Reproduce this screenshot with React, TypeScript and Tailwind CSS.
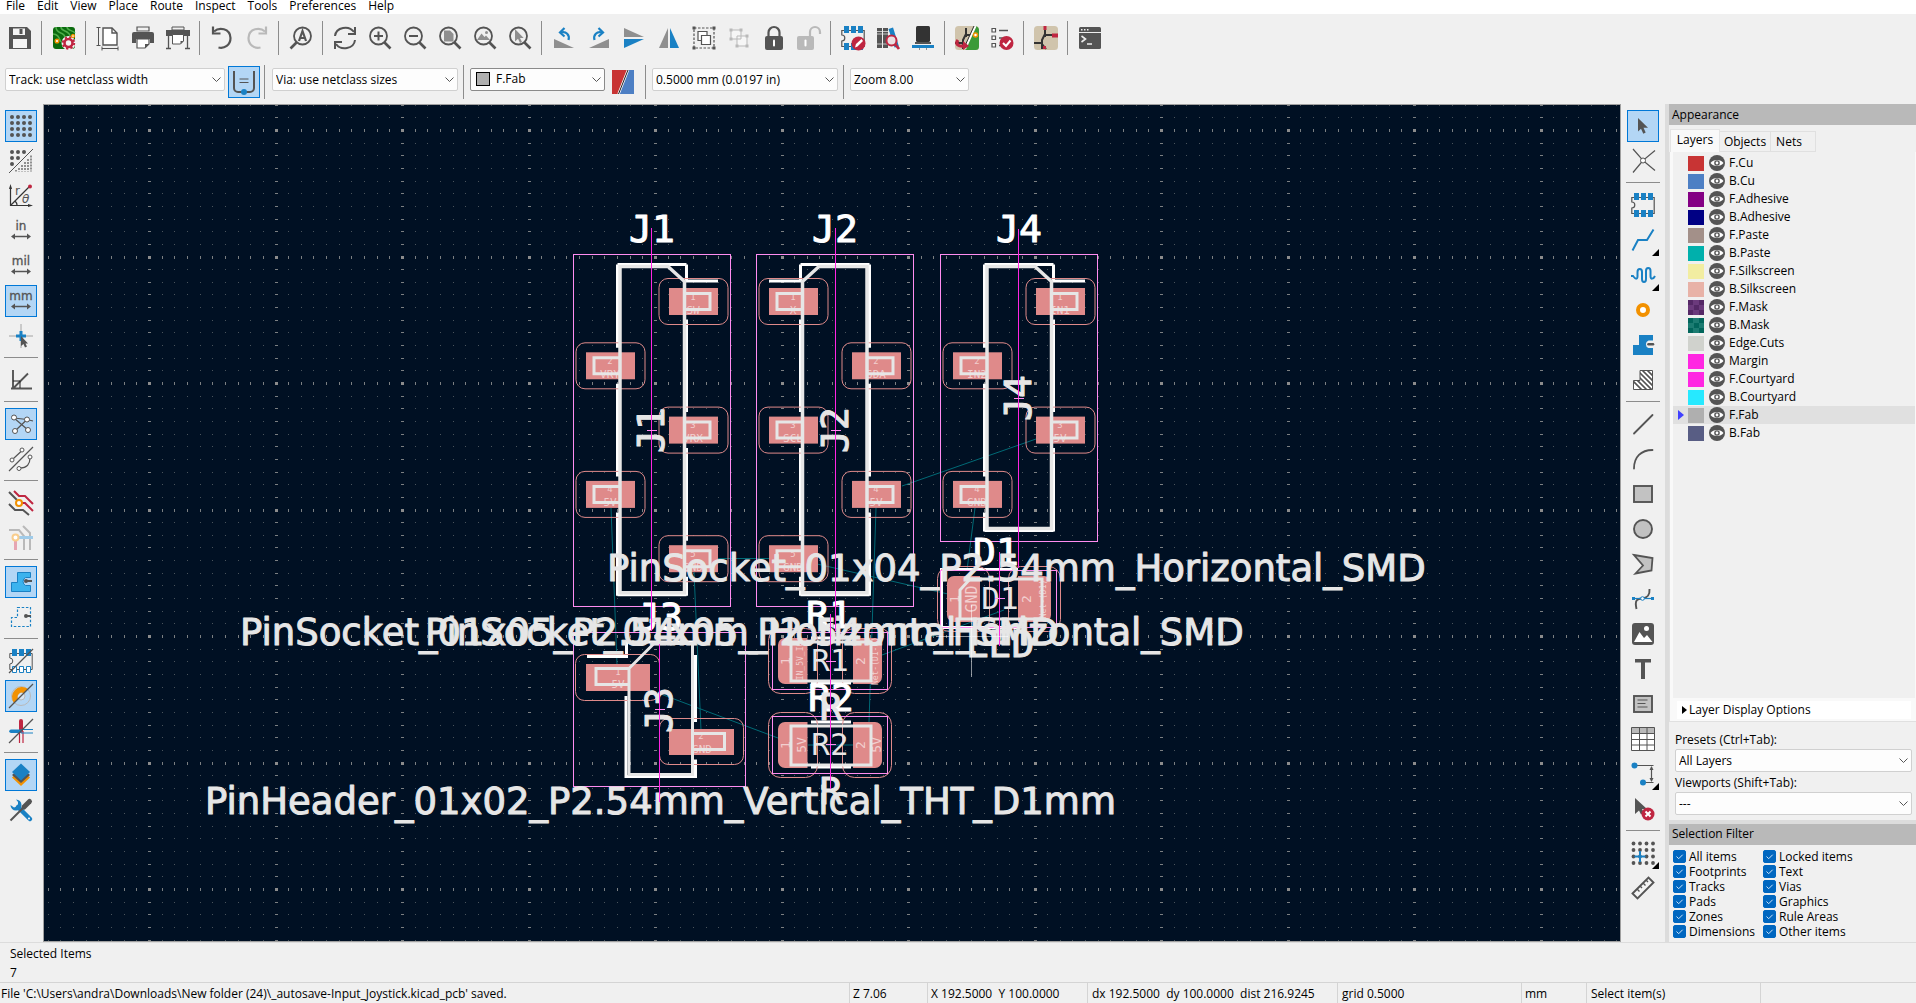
import React, { useState } from "react";

const D = "#545454";
const B = "#1a81c4";
const R = "#bf2641";
const O = "#f29100";
const G = "#b9b9b9";
const M = "#8f8f8f";

const lens = (
  <>
    <circle cx="10.5" cy="10" r="8.5" fill="none" stroke={D} strokeWidth="1.8" />
    <path d="M16.5 16.5 22.5 22.5" stroke={D} strokeWidth="2.6" />
  </>
);

const footprint = (
  <>
    <path d="M.8 4.5V9a3 3 0 0 1 0 6v5.5h22.4v-16z" fill="none" stroke={D} strokeWidth="1.2" />
    <path d="M3 0h5v7H3zM10 0h5v7h-5zM17 0h5v7h-5zM3 17h5v7H3zM10 17h5v7h-5zM17 17h5v7h-5z" fill={B} />
  </>
);

const arrows = <path d="M2 16.5 6 13.5v2.2h12v-2.2l4 3-4 3v-2.2H6v2.2z" transform="translate(0 1)" fill={D} />;

const schematic = (
  <>
    <rect x="0" y="0" width="24" height="24" rx="3.5" fill="#d0c4ac" />
    <path d="M11 2v9M11 9h9M11 8 8 14v9M0 17h8M8 18l4 5" fill="none" stroke="#333" strokeWidth="2" />
  </>
);

const icons: Record<string, React.ReactNode> = {
  save: (
    <>
      <path d="M1 1h18l4 4v18H1z" fill={D} />
      <path d="M5 2.5h12v6.5H5zM5 13h14v9H5z" fill="#f4f4f4" />
      <path d="M11.5 3h3v5h-3z" fill={D} />
    </>
  ),
  boardSetup: (
    <>
      <rect x="1" y="1" width="22" height="22" rx="3" fill="#0b6b0f" />
      <path d="M4 1c0 8 9 4 9 11M9 1c0 5 8 3 9 9M15 1c0 4 6 3 8 6M1 8c5 0 6 4 8 8" fill="none" stroke="#4fae4a" strokeWidth="1.5" />
      <circle cx="16.5" cy="17" r="7" fill="#f4f4f4" />
      <circle cx="16.5" cy="17" r="4" fill="none" stroke={R} strokeWidth="2.6" />
      <circle cx="16.5" cy="17" r="5.7" fill="none" stroke={R} strokeWidth="2" strokeDasharray="2.24 2.24" />
      <circle cx="5" cy="15" r="1.8" fill="#fff" stroke={O} strokeWidth="1.5" />
      <circle cx="21" cy="10" r="1.5" fill="#fff" stroke={O} strokeWidth="1.3" />
    </>
  ),
  page: (
    <>
      <path d="M7 2h9l5 5v12H7z" fill="#fff" stroke={D} strokeWidth="1.4" />
      <path d="M16 2v5h5" fill="none" stroke={D} strokeWidth="1.4" />
      <path d="M2.5 1.5v18M.5 1.5h4M.5 19.5h4M6 22.5h16M6 20.5v4M22 20.5v4" stroke={D} />
    </>
  ),
  print: (
    <>
      <path d="M6 1h12v4H6z" fill="none" stroke={D} strokeWidth="1.2" />
      <path d="M1 8a2 2 0 0 1 2-2h18a2 2 0 0 1 2 2v9h-4v-4H5v4H1z" fill={D} />
      <path d="M6 13h12v5l-4 4H6z" fill="#fff" stroke={D} strokeWidth="1.2" />
      <path d="M18 18h-4v4z" fill={D} />
    </>
  ),
  plot: (
    <>
      <path d="M6 1h12v3H6z" fill="none" stroke={D} />
      <path d="M0 4h24v6H0z" fill={D} />
      <path d="M2.5 10v13M21.5 10v13M0 22.5h5M19 22.5h5" stroke={D} strokeWidth="1.3" />
      <path d="M6.5 8.5h11V15l-3 3h-8z" fill="#fff" stroke={D} />
      <path d="M17.5 15h-3v3z" fill={D} />
    </>
  ),
  undo: (
    <>
      <path d="M4 5.5C9 1 20 2 20.5 12c0 7-6 11-12 9.5" fill="none" stroke={D} strokeWidth="2.2" />
      <path d="M3 .5v7h7.5" fill="none" stroke={D} strokeWidth="2.2" />
    </>
  ),
  redo: (
    <>
      <path d="M20 5.5C15 1 4 2 3.5 12c0 7 6 11 12 9.5" fill="none" stroke={G} strokeWidth="2.2" />
      <path d="M21 .5v7h-7.5" fill="none" stroke={G} strokeWidth="2.2" />
    </>
  ),
  find: (
    <>
      <circle cx="13.5" cy="10" r="8.5" fill="none" stroke={D} strokeWidth="1.8" />
      <path d="M7.5 16.5 1.5 22.5" stroke={D} strokeWidth="2.6" />
      <path d="M10 15 13.5 5 17 15M11 12h5" fill="none" stroke={D} strokeWidth="2.2" />
    </>
  ),
  refresh: (
    <>
      <path d="M2 10C3 1 16-1 21 6M22 14c-1 9-14 11-19 4" fill="none" stroke={D} strokeWidth="2" />
      <path d="M22 1v7h-7M2 23v-7h7" fill="none" stroke={D} strokeWidth="2" />
    </>
  ),
  zoomIn: (
    <>
      {lens}
      <path d="M10.5 5.5v9M6 10h9" stroke={D} strokeWidth="2" />
    </>
  ),
  zoomOut: (
    <>
      {lens}
      <path d="M6 10h9" stroke={D} strokeWidth="2" />
    </>
  ),
  zoomPage: (
    <>
      {lens}
      <path d="M6 4.5h6l3.5 3.5v7.5H6z" fill={M} />
    </>
  ),
  zoomObjects: (
    <>
      {lens}
      <path d="M4 14 8.5 7.5l3 3.5 1.5-1.5 4 4.5z" fill={M} />
      <circle cx="13.5" cy="6.5" r="1.5" fill={M} />
    </>
  ),
  zoomSelection: (
    <>
      {lens}
      <path d="M7 3v12.5l3-2.7 2 4.2 2-1-2-4h3.7z" fill={M} />
    </>
  ),
  rotateCcw: (
    <>
      <path d="M2 13v9h20z" fill={M} />
      <path d="M16.5 14C18 9 14 5 9 6.5" fill="none" stroke={B} strokeWidth="2.2" />
      <path d="M12.5 2 8 6.5l4.5 4" fill="none" stroke={B} strokeWidth="2.2" />
    </>
  ),
  rotateCw: (
    <>
      <path d="M22 13v9H2z" fill={M} />
      <path d="M7.5 14C6 9 10 5 15 6.5" fill="none" stroke={B} strokeWidth="2.2" />
      <path d="M11.5 2 16 6.5l-4.5 4" fill="none" stroke={B} strokeWidth="2.2" />
    </>
  ),
  flipV: (
    <>
      <path d="M2 2v9h20z" fill={M} />
      <path d="M2 22v-9h20z" fill={B} />
    </>
  ),
  flipH: (
    <>
      <path d="M11 2v20H2z" fill={M} />
      <path d="M13 2v20h9z" fill={B} />
    </>
  ),
  group: (
    <>
      <rect x="2" y="2" width="20" height="20" fill="none" stroke={D} strokeWidth="1.2" strokeDasharray="2.5 1.5" />
      <path d="M.5.5h3v3h-3zM20.5.5h3v3h-3zM.5 20.5h3v3h-3zM20.5 20.5h3v3h-3z" fill={D} />
      <path d="M6 5.5h9v9H6z" fill="#fff" stroke={D} strokeWidth="1.2" />
      <path d="M9.5 9.5h9v9h-9z" fill="#fff" stroke={D} strokeWidth="1.2" />
    </>
  ),
  ungroup: (
    <>
      <path d="M4 4h10v9H4zM10 10h10v10H10z" fill="#f6f6f6" stroke={G} />
      <path d="M2.5 2.5h3v3h-3zM12.5 2.5h3v3h-3zM2.5 11.5h3v3h-3zM18.5 8.5h3v3h-3zM8.5 18.5h3v3h-3zM18.5 18.5h3v3h-3z" fill={G} />
    </>
  ),
  lock: (
    <>
      <path d="M6.5 11V6.5a5.5 5.5 0 0 1 11 0V11" fill="none" stroke={D} strokeWidth="2.2" />
      <rect x="3" y="10" width="18" height="14" rx="2" fill={D} />
      <path d="M12 14.5v5" stroke="#fff" strokeWidth="2" strokeLinecap="round" />
    </>
  ),
  unlock: (
    <>
      <path d="M13 11V6a5 5 0 0 1 10 0v2" fill="none" stroke={G} strokeWidth="2.2" />
      <rect x="0" y="10" width="17" height="14" rx="2" fill={G} />
      <path d="M8.5 14.5v5" stroke="#fff" strokeWidth="2" strokeLinecap="round" />
    </>
  ),
  footprintEditor: (
    <>
      {footprint}
      <circle cx="17.5" cy="17.5" r="7" fill={R} />
      <path d="M14 21.5 15 18l5.5-5 1.5 2-5.5 5.5z" fill="#fff" />
    </>
  ),
  library: (
    <>
      <path d="M1 2h5v20H1zM7 2h5v20H7z" fill={D} />
      <path d="M1 5.5h5M1 8h5M7 5.5h5M7 8h5M1 18h11" stroke="#ddd" strokeWidth=".8" />
      <path d="m12.5 3 4.5-1.5 6 19-4.5 1z" fill={B} />
      <circle cx="15.5" cy="14.5" r="5" fill="#eadfe2" stroke={R} strokeWidth="2" />
      <path d="M19 18l4 5" stroke={R} strokeWidth="2.8" />
    </>
  ),
  viewer3d: (
    <>
      <rect x="5" y="0" width="14" height="16" rx="1.5" fill="#333" />
      <path d="M4 16h16v2H4z" fill={D} />
      <path d="M1 19h22v3H1z" fill={B} />
      <path d="M8.5 22v2M15.5 22v2" stroke={M} />
    </>
  ),
  updatePcb: (
    <>
      {schematic}
      <path d="M19.5 0a4.5 4.5 0 0 1 4.5 3.5v17a3.5 3.5 0 0 1-3.5 3.5H10z" fill="#3c9a38" />
      <path d="M20.5 0 10 23" stroke="#fff" strokeWidth="2" />
      <path d="M19 0 9 22" stroke="#333" strokeWidth="1" />
      <circle cx="20.5" cy="9" r="2" fill="#fff" stroke={O} strokeWidth="1.5" />
      <path d="M3 14c-3 4 0 7 7 6" fill="none" stroke={R} strokeWidth="3.2" />
      <path d="m8 15 6 5-6 4z" fill={R} />
    </>
  ),
  drc: (
    <>
      <path d="M2 2.5h3.5V6H2zM2 10h3.5v3.5H2zM2 17.5h3.5V21H2z" fill="#fff" stroke={D} strokeWidth="1.2" />
      <path d="M9 4.5h9M9 12h5M9 19.5h3" stroke={D} strokeWidth="1.5" />
      <circle cx="16.5" cy="17" r="7" fill={R} />
      <path d="m13 17 3 3 4.5-5.5" fill="none" stroke="#fff" strokeWidth="2" />
    </>
  ),
  schematicEditor: (
    <>
      {schematic}
      <path d="M9.5 0h3v4h-3zM18 7.5h6v4h-6zM9 20h3v3H9z" fill={R} />
    </>
  ),
  console: (
    <>
      <rect x="1" y="1" width="22" height="22" rx="1.5" fill={D} />
      <path d="M1 6.5h22" stroke="#eee" />
      <path d="M3 3.8h1.5M6 3.8h1.5M9 3.8h1.5" stroke="#eee" strokeWidth="1.5" />
      <path d="m3.5 10 4 3-4 3M9 18h5" fill="none" stroke="#eee" strokeWidth="1.6" />
    </>
  ),
  trackWidth: (
    <>
      <path d="M2 1v17a4 4 0 0 0 4 4h12a4 4 0 0 0 4-4V1" fill="none" stroke={D} strokeWidth="2" />
      <path d="M7.5 9h9M7.5 12.5h9" stroke={D} />
      <circle cx="12" cy="22" r="3" fill={B} />
    </>
  ),
  layerPair: (
    <>
      <path d="M1 0h22v24H1z" fill="#c83434" />
      <path d="M17 0h6v24H8z" fill="#4d7fc4" />
      <path d="M17 0 7.5 24" stroke="#fff" strokeWidth="2.4" />
      <path d="M17 0 7.5 24" stroke="#222" strokeWidth="1" />
    </>
  ),
  grid: (
    <>
      {[3, 9, 15, 21].map((y) =>
        [3, 9, 15, 21].map((x) => <circle key={x + "-" + y} cx={x} cy={y} r="2" fill={D} />),
      )}
    </>
  ),
  gridOverride: (
    <>
      <path d="M3 3h0M9 3h0M15 3h0M3 9h0M9 9h0M3 15h0" stroke={D} strokeWidth="4" strokeLinecap="round" />
      <path d="M22 6.5v16M19 10v12.5M16 13v9.5M13 16v6.5M10 19v3.5M7 21v1.5" stroke={M} strokeWidth="2" strokeDasharray="2 1" />
      <path d="M0 24 24 0" stroke={D} strokeWidth="1" />
    </>
  ),
  polar: (
    <>
      <path d="M1.5 3v18.5H21M1.5 21.5 20 3M8 21c0-2-1-3-2-4" fill="none" stroke="#333" strokeWidth="1.2" />
      <path d="M0 5 1.5 0 3 5zM19 20l5 1.5-5 1.5z" fill="#333" />
      <circle cx="21" cy="2.5" r="2" fill={R} />
      <text x="6" y="11" fontSize="12" fill={D} fontFamily="DejaVu Sans">r</text>
      <text x="13" y="19" fontSize="12" fill={D} fontStyle="italic" fontFamily="DejaVu Sans">θ</text>
    </>
  ),
  inch: (
    <>
      <text x="12" y="11" fontSize="12" textAnchor="middle" fill={D} stroke={D} strokeWidth=".3" fontFamily="DejaVu Sans">in</text>
      {arrows}
    </>
  ),
  mil: (
    <>
      <text x="12" y="11" fontSize="12" textAnchor="middle" fill={D} stroke={D} strokeWidth=".3" fontFamily="DejaVu Sans">mil</text>
      {arrows}
    </>
  ),
  mm: (
    <>
      <text x="12" y="11" fontSize="12" textAnchor="middle" fill={D} stroke={D} strokeWidth=".3" fontFamily="DejaVu Sans">mm</text>
      {arrows}
    </>
  ),
  cursor: (
    <>
      <path d="M12 0v24M0 12h24" stroke={M} strokeWidth=".8" />
      <path d="M12 7v10M7 12h10" stroke={B} strokeWidth="3" />
      <path d="M12 12v10l2.5-2 1.5 3.5 2-1-1.5-3H19z" fill={D} />
    </>
  ),
  angle45: (
    <>
      <path d="M4 2v18.5M2 20.5h21M4 20.5 19 5.5" stroke={D} strokeWidth="1.9" />
      <path d="M4 13h7v7" fill="none" stroke="#222" />
    </>
  ),
  ratsnest: (
    <>
      <path d="M5 6 18 7.5 24 9M18 7.5 6 19M5 6l14 12" fill="none" stroke={D} strokeWidth="1.2" />
      <circle cx="5" cy="5.5" r="2.5" fill="#fff" stroke={D} />
      <circle cx="18" cy="7.5" r="2.5" fill="#fff" stroke={D} />
      <circle cx="6" cy="19" r="2.5" fill="#fff" stroke={D} />
      <circle cx="19" cy="18" r="2.5" fill="#fff" stroke={D} />
    </>
  ),
  ratsnestCurved: (
    <>
      <path d="M4.5 11.5 12 4.5M0 24 24 0M11 21c7 0 10-4 10-10" fill="none" stroke={D} strokeWidth="1.2" />
      <circle cx="3" cy="13" r="2" fill="#fff" stroke={D} />
      <circle cx="13" cy="3" r="2" fill="#fff" stroke={D} />
      <circle cx="10" cy="21.5" r="2" fill="#fff" stroke={D} />
      <circle cx="21" cy="10" r="2" fill="#fff" stroke={D} />
    </>
  ),
  highlightNet: (
    <>
      <path d="M0 1 8 9M0 13l6 6h8l6 5" fill="none" stroke={D} strokeWidth="2" />
      <path d="M5 0l5 5h6l8 8M12 12h4l8 8" fill="none" stroke={R} strokeWidth="2" />
      <circle cx="10" cy="12" r="3" fill="#fff" stroke={O} strokeWidth="2" />
    </>
  ),
  netNames: (
    <>
      <path d="M0 4h10l5 6v14M14 0l7 7v17" fill="none" stroke={G} strokeWidth="2" />
      <path d="M8 11.5h16" stroke="#9fcbe9" strokeWidth="3" />
      <path d="M6.5 12v12" stroke="#e6a5b2" strokeWidth="3" />
      <circle cx="6.5" cy="11.5" r="3" fill="#fff" stroke="#f8cd8d" strokeWidth="2" />
    </>
  ),
  zoneFill: (
    <>
      <path d="M8.5 2.5h13v5h-5a4.5 4.5 0 0 0 0 8h5v6h-19v-9h6z" fill="#3bb3ee" stroke={B} />
      <circle cx="17" cy="11" r="2" fill={D} />
      <path d="M17 11h6" stroke={D} strokeWidth="2" />
    </>
  ),
  zoneOutline: (
    <>
      <path d="M8.5 2.5h13v19h-19v-9h6z" fill="none" stroke={B} strokeWidth="1.2" strokeDasharray="2.5 1.7" />
      <circle cx="17" cy="11" r="2" fill={D} />
      <path d="M17 11h5" stroke={D} strokeWidth="2" />
    </>
  ),
  padSketch: (
    <>
      <path d="M.8 4.5V9a3 3 0 0 1 0 6v5.5h22.4v-16z" fill="none" stroke={D} />
      <path d="M3 0h5v7H3zM10 0h5v7h-5zM17 0h5v7h-5z" fill={B} />
      <path d="M3.5 17.5h4v6h-4zM10.5 17.5h4v6h-4zM17.5 17.5h4v6h-4z" fill="#fff" stroke={B} />
      <path d="M0 24 24 0" stroke={D} strokeWidth="1.2" />
    </>
  ),
  viaSketch: (
    <>
      <circle cx="12" cy="12" r="9.5" fill="none" stroke={G} />
      <circle cx="12" cy="12" r="4" fill="#d7e5f2" stroke={G} />
      <path d="M5 19A10 10 0 0 1 19 5l-4 4a4.5 4.5 0 0 0-6 6z" fill={O} />
      <path d="M0 24 24 0" stroke={D} strokeWidth="1.2" />
    </>
  ),
  trackSketch: (
    <>
      <path d="M12 2v10M10.5 12v12M14 12v12" stroke={R} strokeWidth="1.2" />
      <path d="M12 2v10" stroke={R} strokeWidth="4" strokeLinecap="round" />
      <path d="M12 10.5h12M12 14h12" stroke={B} strokeWidth="1.2" />
      <path d="M2 12.2h9" stroke={B} strokeWidth="3.5" strokeLinecap="round" />
      <path d="M0 24 24 0" stroke={D} strokeWidth="1.2" />
    </>
  ),
  layers: (
    <>
      <path d="m12 6 9 8.5-9 8.5-9-8.5z" fill={O} />
      <path d="m12 4 9 8-9 8-9-8z" fill={D} />
      <path d="m12 .5 9 8.5-9 8.5L3 9z" fill={B} />
    </>
  ),
  tools: (
    <>
      <path d="m9 9 12 12" stroke={B} strokeWidth="4.5" strokeLinecap="round" />
      <path d="M7 1.5A5.5 5.5 0 1 1 1.5 7l3.5 2.5L9 8 9 4z" fill={B} />
      <path d="M1.5 22.5 14 10" stroke={D} strokeWidth="2" />
      <path d="m15 9 5.5-5.5" stroke={D} strokeWidth="5" strokeLinecap="round" />
      <circle cx="20" cy="20.5" r="1" fill="#fff" />
    </>
  ),
  select: <path d="M7 4v13.5l3-2.8 2.3 5 2.4-1.2-2.2-4.7H17z" fill={D} />,
  localRatsnest: (
    <>
      <path d="M2 0 12 11.5 24 1.5M12 11.5 2 23.5M12 11.5 24 21.5" fill="none" stroke={D} strokeWidth="1.2" />
      <circle cx="12" cy="11.5" r="2.5" fill="#fff" stroke={D} />
    </>
  ),
  footprint,
  route: <path d="M1.5 22.5 7 12h9L22.5 1.5" fill="none" stroke={B} strokeWidth="2" />,
  tune: (
    <path
      d="M0 13h2c3 4 4.5 3 4.5 0V9c0-4 4.5-4 4.5 0v7c0 4 4 4 4 0V8c0-4 4.5-4 4.5 0v5c0 4 3 3 4.5 0"
      fill="none"
      stroke={B}
      strokeWidth="2"
    />
  ),
  via: <circle cx="12" cy="12" r="5" fill="#fff" stroke={O} strokeWidth="4" />,
  zone: (
    <>
      <path d="M8 2h14v5.5h-4.5a4 4 0 0 0 0 7.5H22v7H2V12h6z" fill={B} />
      <path d="M17.5 11.2H22" stroke={D} strokeWidth="2.6" strokeLinecap="round" />
    </>
  ),
  ruleArea: (
    <>
      <clipPath id="rule-area-clip">
        <path d="M9 2.5h12.5v19h-19v-9H9z" />
      </clipPath>
      <path d="M9 2.5h12.5v19h-19v-9H9z" fill="#fff" stroke={D} />
      <path clipPath="url(#rule-area-clip)" d="M-3 8 15 26M1 7l18 18M5 6l18 18M6 2l18 18M10 1l15 15M14 0l10 10" stroke={D} strokeWidth="1.6" />
    </>
  ),
  line: <path d="M3 21.5 21.5 3" stroke={D} strokeWidth="1.8" strokeLinecap="round" />,
  arc: <path d="M3 21.5C3 10 10 3 21.5 3" fill="none" stroke={D} strokeWidth="1.8" strokeLinecap="round" />,
  rect: <rect x="3" y="4" width="18" height="16" fill="#c2c2c2" stroke={D} strokeWidth="1.9" />,
  circle: <circle cx="12" cy="12" r="9" fill="#c2c2c2" stroke={D} strokeWidth="1.9" />,
  polygon: <path d="M3 3l18.5 3-1 12.5L4.5 21.5 12 13.5z" fill="#c2c2c2" stroke={D} strokeWidth="1.8" />,
  bezier: (
    <>
      <path d="M5.5 22C3.5 13 6 12 11 11.5S19 9 18.5 2" fill="none" stroke={D} strokeWidth="1.9" />
      <path d="M2 11.5h19" stroke={B} strokeWidth="1.2" />
      <path d="M1 10h3v3H1zM20 10h3v3h-3z" fill={B} />
      <circle cx="11.5" cy="11.5" r="1.8" fill="#fff" stroke={B} />
    </>
  ),
  image: (
    <>
      <rect x="1" y="1" width="22" height="22" rx="3" fill={D} />
      <path d="M3 20 8.5 10l4.5 6 3-3 5.5 7z" fill="#fff" />
      <circle cx="15.5" cy="6.5" r="2.5" fill="#fff" />
    </>
  ),
  text: <path d="M4 2h16v3.5h-6V22h-4V5.5H4z" fill={D} />,
  textbox: (
    <>
      <rect x="3" y="4" width="18" height="16" fill="#c2c2c2" stroke={D} strokeWidth="1.9" />
      <path d="M6.5 8h10M6.5 11.5h8M6.5 15h10" stroke={D} strokeWidth="1.2" />
    </>
  ),
  table: (
    <>
      <path d="M.5.5h23v23H.5z" fill="#fff" />
      <path d="M.5.5h23v6H.5z" fill={G} />
      <path d="M.5.5h23v23H.5zM.5 6.5h23M.5 12.5h23M.5 18h23M8.5.5v23M16 .5v23" fill="none" stroke={D} />
    </>
  ),
  dimension: (
    <>
      <path d="M4 3.5h18.5M12 20.5h10.5M20.5 5v14" stroke={D} strokeWidth="1.2" />
      <path d="m18.5 8 2-4 2 4zM18.5 16l2 4 2-4z" fill={D} />
      <circle cx="3.5" cy="3.5" r="3" fill={B} />
      <circle cx="12" cy="20.5" r="3" fill={B} />
    </>
  ),
  deleteTool: (
    <>
      <path d="M4 1v16l4-3.5 2 4 3-1.5-2-4h5z" fill={D} />
      <circle cx="17" cy="17" r="6.5" fill={R} />
      <path d="m14.5 14.5 5 5M19.5 14.5l-5 5" stroke="#fff" strokeWidth="2" />
    </>
  ),
  gridOrigin: (
    <>
      {[2.5, 9, 15.5, 22].map((y) =>
        [2.5, 9, 15.5, 22].map((x) => <circle key={x + "-" + y} cx={x} cy={y} r="1.9" fill={D} />),
      )}
      <path d="M9 10v11M3.5 15.5h11" stroke={B} strokeWidth="2" />
    </>
  ),
  measure: (
    <>
      <path d="m1.5 17.5 16-16 5 5-16 16z" fill="#f4f4f4" stroke={D} strokeWidth="1.9" />
      <path d="m6 13 2.5 2.5M9 10l2 2M12 7l2.5 2.5M15 4l2 2" stroke={D} strokeWidth="1.4" />
    </>
  ),
};

function Icon({ name }: { name: string }) {
  return (
    <svg className="size-6 shrink-0 overflow-visible" viewBox="0 0 24 24" aria-hidden="true">
      {icons[name]}
    </svg>
  );
}

type Tool = { icon: string; label: string; active?: boolean; menu?: boolean } | null;

const t = (icon: string, label: string, extra: { active?: boolean; menu?: boolean } = {}): Tool => ({ icon, label, ...extra });

const mainTools: Tool[] = [
  t("save", "Save"), null,
  t("boardSetup", "Board setup"), null,
  t("page", "Page settings"), t("print", "Print"), t("plot", "Plot"), null,
  t("undo", "Undo"), t("redo", "Redo"), null,
  t("find", "Find"), null,
  t("refresh", "Refresh"), t("zoomIn", "Zoom in"), t("zoomOut", "Zoom out"), t("zoomPage", "Zoom to fit"),
  t("zoomObjects", "Zoom to objects"), t("zoomSelection", "Zoom to selection"), null,
  t("rotateCcw", "Rotate counterclockwise"), t("rotateCw", "Rotate clockwise"), t("flipV", "Mirror vertically"),
  t("flipH", "Mirror horizontally"), t("group", "Group"), t("ungroup", "Ungroup"), t("lock", "Lock"), t("unlock", "Unlock"), null,
  t("footprintEditor", "Footprint editor"), t("library", "Footprint library browser"), t("viewer3d", "3D viewer"), null,
  t("updatePcb", "Update PCB from schematic"), t("drc", "Design rules checker"), null,
  t("schematicEditor", "Schematic editor"), null,
  t("console", "Scripting console"),
];

const leftTools: Tool[] = [
  t("grid", "Show grid", { active: true }), t("gridOverride", "Grid overrides"), t("polar", "Polar coordinates"),
  t("inch", "Inches"), t("mil", "Mils"), t("mm", "Millimeters", { active: true }), t("cursor", "Full-window crosshairs"), null,
  t("angle45", "Constrain to 45 degrees"), null,
  t("ratsnest", "Show ratsnest", { active: true }), t("ratsnestCurved", "Curved ratsnest"), null,
  t("highlightNet", "Inactive layer view mode"), t("netNames", "Net highlighting"), null,
  t("zoneFill", "Show filled zones", { active: true }), t("zoneOutline", "Show zone outlines"), null,
  t("padSketch", "Sketch pads"), t("viaSketch", "Sketch vias", { active: true }), t("trackSketch", "Sketch tracks"), null,
  t("layers", "Appearance manager", { active: true }), t("tools", "Properties"),
];

const rightTools: Tool[] = [
  t("select", "Select", { active: true }), t("localRatsnest", "Local ratsnest"), null,
  t("footprint", "Place footprint"), t("route", "Route tracks", { menu: true }), t("tune", "Tune length", { menu: true }),
  t("via", "Add via"), t("zone", "Add zone"), t("ruleArea", "Add rule area"), null,
  t("line", "Draw line"), t("arc", "Draw arc"), t("rect", "Draw rectangle"), t("circle", "Draw circle"),
  t("polygon", "Draw polygon"), t("bezier", "Draw bezier"), t("image", "Place image"), t("text", "Add text"),
  t("textbox", "Add text box"), t("table", "Add table"), t("dimension", "Add dimension", { menu: true }),
  t("deleteTool", "Delete"), null,
  t("gridOrigin", "Set grid origin", { menu: true }), t("measure", "Measure"),
];

function ToolButton({ tool }: { tool: NonNullable<Tool> }) {
  return (
    <button
      type="button"
      aria-label={tool.label}
      aria-pressed={tool.active}
      className={
        tool.active
          ? "relative flex size-8 shrink-0 items-center justify-center border border-[#0078d7] bg-[#b3d6f5]"
          : "relative flex size-8 shrink-0 items-center justify-center"
      }
    >
      <Icon name={tool.icon} />
      {tool.menu && (
        <svg className="absolute right-0 bottom-0 size-[7px]" viewBox="0 0 7 7" aria-hidden="true">
          <path d="M7 0v7H0z" fill="#000" />
        </svg>
      )}
    </button>
  );
}

function SideBar({ tools, label }: { tools: Tool[]; label: string }) {
  return (
    <div role="toolbar" aria-label={label} aria-orientation="vertical" className="flex flex-col items-center gap-[3px] pt-[6px]">
      {tools.map((tool, i) =>
        tool ? <ToolButton key={i} tool={tool} /> : <span key={i} className="my-[2px] h-[2px] w-[34px] border-t border-[#8c8c8c]" />,
      )}
    </div>
  );
}

function Divider() {
  return <span className="mx-1 h-[34px] w-px shrink-0 bg-[#8c8c8c]" />;
}

function Combo({ label, value, width, swatch }: { label: string; value: string; width: string; swatch?: boolean }) {
  return (
    <div className={"relative flex h-[23px] shrink-0 items-center " + width}>
      <select
        aria-label={label}
        className={
          swatch
            ? "h-full w-full appearance-none rounded-[2px] border border-[#8a8a8a] bg-[#fdfdfd] pl-[25px] text-xs"
            : "h-full w-full appearance-none rounded-[2px] border border-[#d0d0d0] bg-[#fdfdfd] pl-[3px] text-xs"
        }
      >
        <option>{value}</option>
      </select>
      {swatch && <span className="pointer-events-none absolute left-[6px] size-[14px] border border-black bg-[#afafaf]" />}
      <svg className="pointer-events-none absolute right-[4px] h-[5px] w-[9px]" viewBox="0 0 9 5" aria-hidden="true">
        <path d="m.5.5 4 4 4-4" fill="none" stroke="#555" />
      </svg>
    </div>
  );
}

/* ---------- board ---------- */

const FAB = "#e6e6e6";
const PAD = "#df8a8a";
const PADTEXT = "#f2cfcf";
const COURT = "#ff8cf0";
const AXIS = "#ff26e2";
const NET = "#006a76";
const MONO = '"DejaVu Sans Mono", monospace';
const SANS = '"DejaVu Sans", sans-serif';

const STEP = 12.65;
const GRID_X = 149 - STEP * 10;
const GRID_Y = 130 - STEP * 10;

function gridPaths() {
  let dots = "";
  let ticks = "";
  let nodes = "";
  for (let i = 0; i <= 128; i++) {
    const x = Math.round(GRID_X + i * STEP);
    for (let j = 0; j <= 74; j++) {
      const y = Math.round(GRID_Y + j * STEP);
      const mx = i % 10 === 0;
      const my = j % 10 === 0;
      if (mx && my) nodes += `M${x - 1} ${y - 1}h3v3h-3z`;
      else if (mx) ticks += `M${x - 1} ${y}h3v1h-3z`;
      else if (my) ticks += `M${x} ${y - 1}h1v3h-1z`;
      else dots += `M${x} ${y}h1v1h-1z`;
    }
  }
  return { dots, ticks, nodes };
}

const gridData = gridPaths();

function Label({ x, y, children, size = 38, fill = FAB, family = MONO, up = false }: {
  x: number; y: number; children: string; size?: number; fill?: string; family?: string; up?: boolean;
}) {
  return (
    <text
      x={x}
      y={y}
      fontSize={size}
      fill={fill}
      fontFamily={family}
      textAnchor="middle"
      stroke={size > 31 ? fill : "none"}
      strokeWidth={size > 31 ? 1 : 0}
      strokeLinejoin="round"
      transform={up ? `rotate(-90 ${x} ${y})` : undefined}
    >
      {children}
    </text>
  );
}

function Cross({ x, y, from, to }: { x: number; y: number; from: number; to: number }) {
  return (
    <g shapeRendering="crispEdges">
      <path d={`M${x} ${from}V${to}`} stroke={AXIS} />
      <path d={`M${x - 5} ${y}h10`} stroke={COURT} />
    </g>
  );
}

function Socket({ cx, top, name, pins, first }: { cx: number; top: number; name: string; pins: string[]; first: 1 | -1 }) {
  const n = pins.length;
  const pinY = (i: number) => top + 47.5 + i * 64.3;
  const bodyTop = top + 12.5;
  const bodyBottom = pinY(n - 1) + 34;
  const sideSilk = (side: 1 | -1) => {
    const x = cx + side * 34.5;
    let d = "";
    let y = bodyTop - 2;
    pins.forEach((_, i) => {
      const padSide = i % 2 === 0 ? first : -first;
      if (padSide !== side) return;
      const stop = i === 0 ? bodyTop + 15 : pinY(i) - 18;
      d += `M${x} ${y}V${stop}`;
      y = pinY(i) + 18;
    });
    return d + `M${x} ${y}V${bodyBottom + 3}`;
  };
  return (
    <g>
      <rect x={cx - 78.5} y={top + 0.5} width="157" height={pinY(n - 1) + 47 - top} fill="none" stroke={COURT} shapeRendering="crispEdges" />
      <path
        d={`${sideSilk(1)}${sideSilk(-1)}M${cx - 34.5} ${bodyTop - 2}h69M${cx - 34.5} ${bodyBottom + 2}h69`}
        stroke="#fff"
        strokeWidth="3"
        fill="none"
      />
      <path d={`M${cx + first * 34} ${bodyTop + 14.5}H${cx + first * 66}`} stroke="#fff" strokeWidth="3" />
      {pins.map((net, i) => {
        const side = i % 2 === 0 ? first : -first;
        const x = side > 0 ? cx + 17 : cx - 66;
        const y = pinY(i);
        return (
          <g key={i}>
            <rect x={x} y={y - 13.5} width="49" height="27" fill={PAD} />
            <rect x={x - 10} y={y - 23} width="69" height="46" rx="9" fill="none" stroke={PAD} />
            <Label x={x + 24} y={y - 2} size={9} fill={PADTEXT}>{String(i + 1)}</Label>
            <Label x={x + 24} y={y + 12} size={11} fill={PADTEXT}>{net}</Label>
            <path
              d={side > 0 ? `M${cx + 32} ${y - 8}h26v16h-26` : `M${cx - 32} ${y - 8}h-26v16h26`}
              fill="none"
              stroke={FAB}
              strokeWidth="3"
            />
          </g>
        );
      })}
      <path
        d={`M${cx + first * 16} ${bodyTop}L${cx + first * 32.5} ${bodyTop + 15}V${bodyBottom}H${cx - first * 32} V${bodyTop}z`}
        fill="none"
        stroke={FAB}
        strokeWidth="3.5"
      />
      <Label x={cx} y={top - 12} fill="#fff">{name}</Label>
    </g>
  );
}

function Chip({ y, name, nets }: { y: number; name: string; nets: [string, string] }) {
  const netSize = nets[0].length > 3 ? 8 : 13;
  return (
    <g>
      <path d={`M811 ${y - 23}h40M811 ${y + 22}h40`} stroke="#fff" strokeWidth="3" />
      <path d={`M807.5 ${y - 23}v46H785a7 7 0 0 1-7-7v-32a7 7 0 0 1 7-7zM853 ${y - 23}v46h22a7 7 0 0 0 7-7v-32a7 7 0 0 0-7-7z`} fill={PAD} />
      <rect x="768.5" y={y - 32.5} width="49" height="65" rx="12" fill="none" stroke={PAD} />
      <rect x="842.5" y={y - 32.5} width="49" height="65" rx="12" fill="none" stroke={PAD} />
      <rect x="772.5" y={y - 28.5} width="115" height="57" fill="none" stroke={COURT} shapeRendering="crispEdges" />
      <Label x={790} y={y} up size={13} fill={PADTEXT}>1</Label>
      <Label x={865} y={y} up size={13} fill={PADTEXT}>2</Label>
      <Label x={netSize === 8 ? 803 : 806} y={y} up size={netSize} fill={PADTEXT}>{nets[0]}</Label>
      <Label x={netSize === 8 ? 878 : 881} y={y} up size={netSize} fill={PADTEXT}>{nets[1]}</Label>
      <rect x="791" y={y - 19} width="80" height="39" fill="none" stroke={FAB} strokeWidth="3" />
      <Label x={830} y={y + 10} size={31}>{name}</Label>
    </g>
  );
}

function Board() {
  return (
    <svg className="absolute inset-0 h-full w-full" role="img" aria-label="PCB layout">
      <g transform="translate(-44 -105)">
        <g shapeRendering="crispEdges">
          <path d={gridData.dots} fill="#4a545c" />
          <path d={gridData.ticks} fill="#7b7f82" />
          <path d={gridData.nodes} fill="#8c8c8c" />
        </g>

        <path
          d="M611 508 617 664M717 558.5h52M694 572l7 158M876 508l-7 214M902 486 1036 439M817 564l131 30M975 508l-8 62M882 655l122-45M650 690l128 48M808 745h45"
          fill="none"
          stroke={NET}
        />

        <Socket cx={652} top={254} name="J1" first={1} pins={["SW", "VRY", "VRX", "5V", "GND"]} />
        <Socket cx={835} top={254} name="J2" first={-1} pins={["X", "SDA", "SCL", "5V", "GND"]} />
        <Socket cx={1019} top={254} name="J4" first={1} pins={["IN1", "IN2", "5V", "GND"]} />

        {/* J3 header */}
        <rect x="573.5" y="632.5" width="172" height="154" fill="none" stroke={COURT} shapeRendering="crispEdges" />
        <path d="M587 656.5h39.5v-14.5h69M626 696v80.5h69.5v-17M695.5 655v67" fill="none" stroke="#fff" strokeWidth="3" />
        <rect x="586" y="664" width="64" height="27" fill={PAD} />
        <rect x="669" y="729" width="65" height="26" fill={PAD} />
        <rect x="575.5" y="654.5" width="84" height="46" rx="9" fill="none" stroke={PAD} />
        <rect x="659.5" y="718.5" width="84" height="46" rx="9" fill="none" stroke={PAD} />
        <Label x={618} y={675} size={9} fill={PADTEXT}>1</Label>
        <Label x={618} y={688} size={11} fill={PADTEXT}>5V</Label>
        <Label x={701} y={739} size={9} fill={PADTEXT}>2</Label>
        <Label x={702} y={753} size={11} fill={PADTEXT}>GND</Label>
        <path d="M629 668.5h-33v16h33M692.5 733.5h32v16h-32M654 643.5 629 668.5V774.5h63.5V643.5z" fill="none" stroke={FAB} strokeWidth="3" />
        <Label x={660} y={630} fill="#fff">J3</Label>

        <Chip y={661} name="R1" nets={["IN_5V_IO", "Net-(D1-A)"]} />
        <Chip y={745} name="R2" nets={["5V", "5V"]} />
        <Label x={829} y={628} fill="#fff">R1</Label>
        <Label x={831} y={711} fill="#fff">R2</Label>

        {/* D1 */}
        <path d="M1018 569.5H941.5v58H1018" fill="none" stroke="#fff" strokeWidth="3" />
        <path d="M980 576v46h-26a7 7 0 0 1-7-7v-32a7 7 0 0 1 7-7zM1018 576v46h26a7 7 0 0 0 7-7v-32a7 7 0 0 0-7-7z" fill={PAD} />
        <rect x="937.5" y="566.5" width="52" height="65" rx="12" fill="none" stroke={PAD} />
        <rect x="1008.5" y="566.5" width="52" height="65" rx="12" fill="none" stroke={PAD} />
        <rect x="940.5" y="570.5" width="116" height="57" fill="none" stroke={COURT} shapeRendering="crispEdges" />
        <Label x={959} y={599} up size={13} fill={PADTEXT}>1</Label>
        <Label x={1031} y={599} up size={13} fill={PADTEXT}>2</Label>
        <Label x={977} y={599} up size={15} fill={PADTEXT}>GND</Label>
        <Label x={1046} y={599} up size={8} fill={PADTEXT}>Net-(D1)</Label>
        <path d="M970 579h72v40h-82v-29z" fill="none" stroke={FAB} strokeWidth="3" />
        <Label x={1000} y={609} size={31}>D1</Label>
        <Label x={996} y={565} fill="#fff">D1</Label>
        <Label x={1000} y={657}>LED</Label>

        <Label x={664} y={430} up>J1</Label>
        <Label x={848} y={430} up>J2</Label>
        <Label x={1031} y={398} up>J4</Label>
        <Label x={672} y={710} up>J3</Label>
        <Label x={831} y={720}>R</Label>
        <Label x={831} y={804}>R</Label>

        <g fontSize="37" fontFamily={SANS} fill={FAB} stroke={FAB} strokeWidth="1" strokeLinejoin="round">
          <text x="607" y="581">PinSocket_01x04_P2.54mm_Horizontal_SMD</text>
          <text x="240" y="645">PinSocket_01x05_P2.54mm_Horizontal_SMD</text>
          <text x="425" y="645">PinSocket_01x05_P2.54mm_Horizontal_SMD</text>
          <text x="205" y="814">PinHeader_01x02_P2.54mm_Vertical_THT_D1mm</text>
        </g>

        <Cross x={651.5} y={430.5} from={228} to={631} />
        <Cross x={835.5} y={430.5} from={228} to={631} />
        <Cross x={1018.5} y={398.5} from={229} to={568} />
        <Cross x={659.5} y={709.5} from={644} to={802} />
        <Cross x={830.5} y={661.5} from={614} to={789} />
        <Cross x={830.5} y={744.5} from={744} to={789} />
        <Cross x={999.5} y={598.5} from={552} to={646} />
        <path d="M971.5 605v72M936 636.5h72" stroke="#fff" strokeOpacity=".55" shapeRendering="crispEdges" />
      </g>
    </svg>
  );
}

/* ---------- appearance panel ---------- */

const layers: [string, string][] = [
  ["F.Cu", "bg-[#c83434]"],
  ["B.Cu", "bg-[#4d7fc4]"],
  ["F.Adhesive", "bg-[#840084]"],
  ["B.Adhesive", "bg-[#000084]"],
  ["F.Paste", "bg-[#a39089]"],
  ["B.Paste", "bg-[#00b0ac]"],
  ["F.Silkscreen", "bg-[#f2eda1]"],
  ["B.Silkscreen", "bg-[#e8b2a7]"],
  ["F.Mask", "bg-[repeating-conic-gradient(#6b3a7c_0_25%,#552866_0_50%)] bg-[size:11px_10px]"],
  ["B.Mask", "bg-[repeating-conic-gradient(#1c7c72_0_25%,#02665c_0_50%)] bg-[size:11px_10px]"],
  ["Edge.Cuts", "bg-[#d0d2cd]"],
  ["Margin", "bg-[#ff26e2]"],
  ["F.Courtyard", "bg-[#ff26e2]"],
  ["B.Courtyard", "bg-[#26e9ff]"],
  ["F.Fab", "bg-[#afafaf]"],
  ["B.Fab", "bg-[#585d84]"],
];

const filters = [
  "All items", "Locked items", "Footprints", "Text", "Tracks", "Vias",
  "Pads", "Graphics", "Zones", "Rule Areas", "Dimensions", "Other items",
];

function Eye() {
  return (
    <svg className="size-4" viewBox="0 0 16 16" aria-hidden="true">
      <circle cx="8" cy="8" r="8" fill={D} />
      <path d="M1.5 8C4 4 12 4 14.5 8 12 12 4 12 1.5 8z" fill="#fff" />
      <circle cx="8" cy="8" r="2.1" fill="none" stroke={D} strokeWidth="1.4" />
    </svg>
  );
}

function Appearance() {
  const [current, setCurrent] = useState("F.Fab");
  return (
    <aside className="flex w-[247px] shrink-0 flex-col bg-[#f0f0f0]">
      <h2 className="h-[21px] bg-[#b9b9b9] pl-[3px] text-xs leading-[21px]">Appearance</h2>
      <div role="tablist" aria-label="Appearance" className="flex h-[27px] items-end pl-px text-xs">
        <button type="button" role="tab" aria-selected="true" className="h-[23px] w-[50px] border border-b-0 border-[#e4e4e4] bg-[#f9f9f9] pb-[3px]">Layers</button>
        <button type="button" role="tab" aria-selected="false" className="h-[21px] w-[51px] border border-l-0 border-[#e0e0e0]">Objects</button>
        <button type="button" role="tab" aria-selected="false" className="h-[21px] w-[45px] border border-l-0 border-[#e0e0e0] pr-2">Nets</button>
      </div>
      <div className="flex min-h-0 flex-1 flex-col border-b border-l border-[#e0e0e0] bg-[#f9f9f9] pb-[2px] pl-[3px]">
        <ul className="mr-px min-h-0 flex-1 bg-[#f0f0f0] pt-[2px]">
          {layers.map(([name, color]) => (
            <li
              key={name}
              onClick={() => setCurrent(name)}
              className={name === current ? "flex h-[18px] items-center bg-[#e0e0e0] pl-[5px]" : "flex h-[18px] items-center pl-[5px]"}
            >
              <svg className="mr-1 h-[10px] w-[6px]" viewBox="0 0 6 10" aria-hidden="true">
                {name === current && <path d="M0 0l6 5-6 5z" fill="#4040ff" />}
              </svg>
              <span className={"h-[15px] w-4 " + color} />
              <button type="button" aria-label={"Toggle " + name} className="mr-1 ml-[5px]">
                <Eye />
              </button>
              <span className="text-xs">{name}</span>
            </li>
          ))}
        </ul>
        <button type="button" className="mt-[3px] mr-[5px] ml-1 flex h-[18px] items-center gap-[2px] bg-white pl-[5px] text-xs">
          <svg className="h-2 w-[5px]" viewBox="0 0 5 8" aria-hidden="true">
            <path d="M0 0l5 4-5 4z" />
          </svg>
          Layer Display Options
        </button>
      </div>
      <div className="flex flex-col px-[4px] pt-[9px] pb-[5px] pl-[6px] text-xs">
        <span className="h-[18px] leading-[18px]">Presets (Ctrl+Tab):</span>
        <Combo label="Presets (Ctrl+Tab)" value="All Layers" width="w-full" />
        <span className="mt-[2px] h-[18px] leading-[18px]">Viewports (Shift+Tab):</span>
        <Combo label="Viewports (Shift+Tab)" value="---" width="w-full" />
      </div>
      <h2 className="h-[25px] border-t-4 border-[#dcdcdc] bg-[#b9b9b9] pl-[3px] text-xs leading-[20px]">Selection Filter</h2>
      <div className="grid grid-cols-[90px_1fr] pt-1 pb-[3px] pl-1">
        {filters.map((f) => (
          <label key={f} className="flex h-[15px] items-center gap-[3px] text-xs leading-[15px]">
            <span className="relative flex size-[13px] shrink-0">
              <input type="checkbox" defaultChecked className="peer size-[13px] appearance-none rounded-[2px] border border-[#0067c0] bg-white checked:bg-[#0067c0]" />
              <svg className="pointer-events-none absolute inset-0 size-[13px] opacity-0 peer-checked:opacity-100" viewBox="0 0 13 13" aria-hidden="true">
                <path d="m3.5 6.5 2.2 2.2 4-4" fill="none" stroke="#cfe4f7" />
              </svg>
            </span>
            {f}
          </label>
        ))}
      </div>
    </aside>
  );
}

const menus = ["File", "Edit", "View", "Place", "Route", "Inspect", "Tools", "Preferences", "Help"];

export default function App() {
  return (
    <div className="flex h-screen flex-col overflow-hidden bg-[#f0f0f0] font-['Open_Sans',sans-serif] text-xs text-black">
      <nav aria-label="Main menu" className="flex h-[14px] shrink-0 gap-3 bg-white pl-[6px]">
        {menus.map((m) => (
          <button key={m} type="button" className="h-3 text-xs leading-3">{m}</button>
        ))}
      </nav>

      <div role="toolbar" aria-label="Main toolbar" className="flex h-12 shrink-0 items-center pl-[2px]">
        {mainTools.map((tool, i) =>
          tool ? (
            <span key={i} className="flex w-[35px] shrink-0 justify-center">
              <ToolButton tool={tool} />
            </span>
          ) : (
            <Divider key={i} />
          ),
        )}
      </div>

      <div role="toolbar" aria-label="Track and view settings" className="flex h-[42px] shrink-0 items-start pt-[3px] pl-[5px]">
        <div className="flex items-center">
          <span className="pb-[5px]">
            <Combo label="Track width" value="Track: use netclass width" width="w-[220px]" />
          </span>
          <span className="ml-[3px] flex">
            <ToolButton tool={{ icon: "trackWidth", label: "Use existing track width", active: true }} />
          </span>
          <Divider />
          <span className="pb-[5px] pl-[3px]">
            <Combo label="Via size" value="Via: use netclass sizes" width="w-[186px]" />
          </span>
          <span className="w-px" />
          <Divider />
          <span className="pb-[6px] pl-[2px]">
            <Combo label="Active layer" value="F.Fab" width="w-[135px]" swatch />
          </span>
          <span className="ml-[2px] flex">
            <ToolButton tool={{ icon: "layerPair", label: "Layer pair" }} />
          </span>
          <span className="w-[2px]" />
          <Divider />
          <span className="pb-[5px] pl-[2px]">
            <Combo label="Grid" value="0.5000 mm (0.0197 in)" width="w-[186px]" />
          </span>
          <span className="w-px" />
          <Divider />
          <span className="pb-[5px] pl-[2px]">
            <Combo label="Zoom" value="Zoom 8.00" width="w-[119px]" />
          </span>
        </div>
      </div>

      <div className="flex min-h-0 flex-1">
        <div className="flex w-[43px] shrink-0 justify-center pr-[2px]">
          <SideBar tools={leftTools} label="Display options" />
        </div>
        <main className="relative min-w-0 flex-1 overflow-hidden border border-[#a0a0a0] bg-[#001023]">
          <Board />
        </main>
        <div className="flex w-[48px] shrink-0 justify-center border-r-4 border-[#dcdcdc]">
          <SideBar tools={rightTools} label="Drawing tools" />
        </div>
        <Appearance />
      </div>

      <section aria-label="Selection info" className="flex h-10 shrink-0 flex-col border-t border-[#dcdcdc] pt-px pl-[10px]">
        <span className="h-5 leading-5">Selected Items</span>
        <span className="h-[18px] leading-[18px]">7</span>
      </section>

      <footer className="flex h-[21px] shrink-0 border-t border-[#d4d4d4] leading-[22px] whitespace-pre">
        <span className="min-w-0 flex-1 pl-px">File 'C:\Users\andra\Downloads\New folder (24)\_autosave-Input_Joystick.kicad_pcb' saved.</span>
        <span className="w-[78px] border-l border-[#d4d4d4] pl-[3px]">Z 7.06</span>
        <span className="w-[160px] border-l border-[#d4d4d4] pl-[3px]">X 192.5000  Y 100.0000</span>
        <span className="w-[250px] border-l border-[#d4d4d4] pl-[4px]">dx 192.5000  dy 100.0000  dist 216.9245</span>
        <span className="w-[184px] border-l border-[#d4d4d4] pl-[4px]">grid 0.5000</span>
        <span className="w-[65px] border-l border-[#d4d4d4] pl-[3px]">mm</span>
        <span className="w-[174px] border-l border-[#d4d4d4] pl-[4px]">Select item(s)</span>
        <span className="w-[156px] border-l border-[#d4d4d4]" />
      </footer>
    </div>
  );
}
